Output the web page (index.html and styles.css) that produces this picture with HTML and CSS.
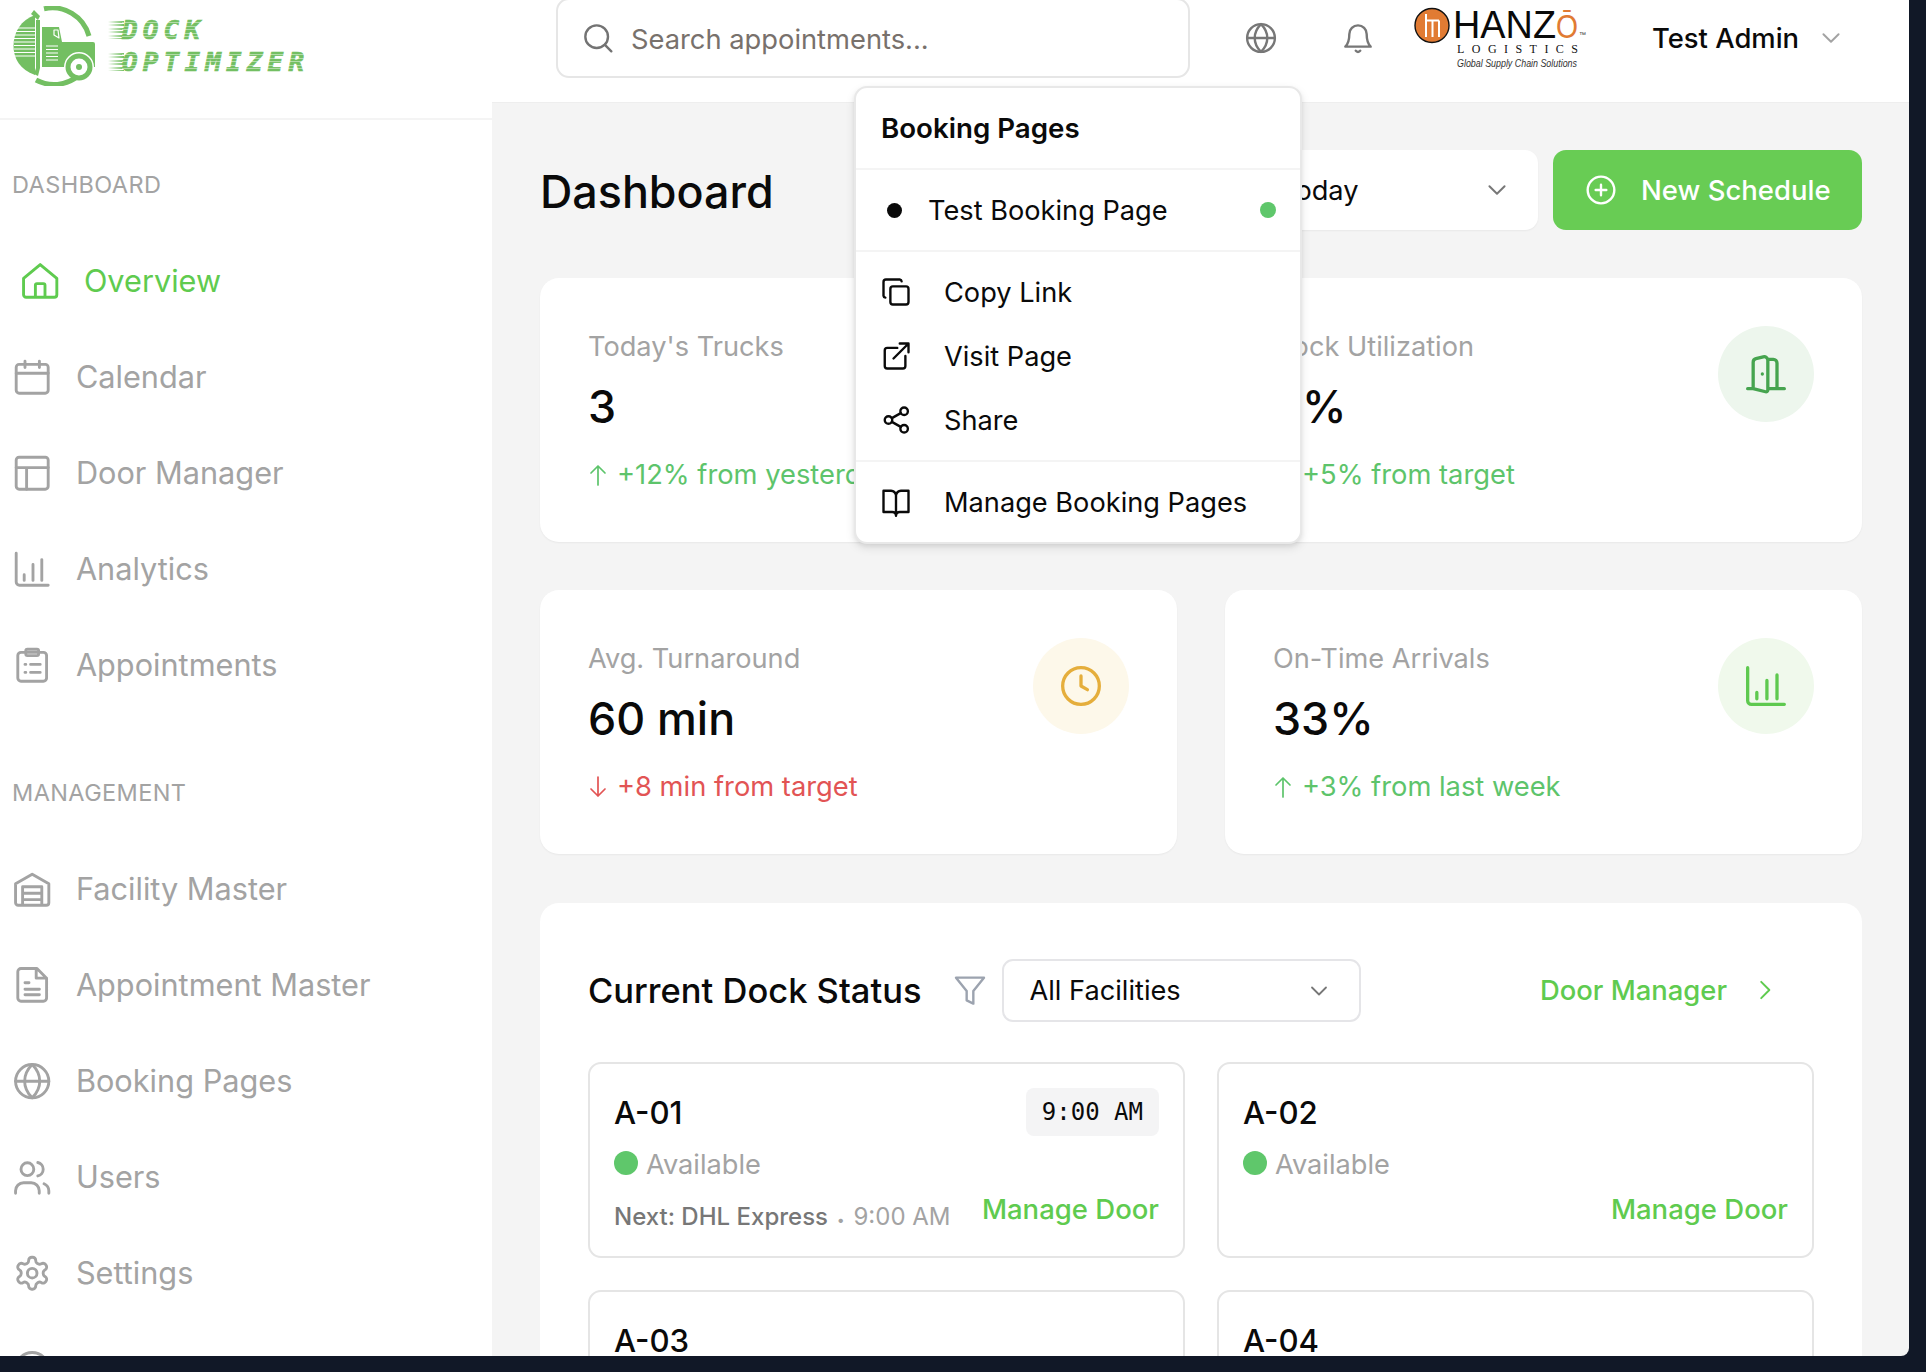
FILE: index.html
```html
<!DOCTYPE html>
<html lang="en">
<head>
<meta charset="utf-8">
<title>Dock Optimizer</title>
<link rel="stylesheet" href="styles.css">
</head>
<body>
<svg class="sprite" aria-hidden="true">
  <symbol id="i-home" viewBox="0 0 24 24"><path d="M1.6 10.2 12 1.6l10.4 8.6v10.2a1.6 1.6 0 0 1-1.6 1.6H3.2a1.6 1.6 0 0 1-1.6-1.6zM9 22v-7.5a1 1 0 0 1 1-1h4a1 1 0 0 1 1 1V22"/></symbol>
  <symbol id="i-cal" viewBox="0 0 24 24"><rect x="2" y="4" width="20" height="18" rx="1.8"/><path d="M2 9.5h20M7.5 2v4M16.5 2v4"/></symbol>
  <symbol id="i-layout" viewBox="0 0 24 24"><rect x="2" y="2" width="20" height="20" rx="1.8"/><path d="M2 8.5h20M8.5 8.5V22"/></symbol>
  <symbol id="i-bars" viewBox="0 0 24 24"><path d="M2 2v18a2 2 0 0 0 2 2h18M7 15.5V19M12.5 9v10M18 6v13"/></symbol>
  <symbol id="i-clip" viewBox="0 0 24 24"><rect x="3" y="4" width="18" height="18" rx="2"/><rect x="8" y="2" width="8" height="4" rx="1"/><path d="M7.5 11.5h.5M11 11.5h6M7.5 16.5h.5M11 16.5h6"/></symbol>
  <symbol id="i-ware" viewBox="0 0 24 24"><path d="M1.6 8.6 12 2.6l10.4 6v11.8a1.6 1.6 0 0 1-1.6 1.6H3.2a1.6 1.6 0 0 1-1.6-1.6zM6 22V10.5h12V22M6 14.5h12M6 18.500h12"/></symbol>
  <symbol id="i-doc" viewBox="0 0 24 24"><path d="M5 1.600h10L21 7.600V20a2 2 0 0 1-2 2H5a2 2 0 0 1-2-2V3.600a2 2 0 0 1 2-2zM14.500 1.600v6H21M7.500 10.500h2.500M7.500 14.500h9M7.500 18h9"/></symbol>
  <symbol id="i-globe" viewBox="0 0 24 24"><circle cx="12" cy="12" r="10.400"/><path d="M1.600 12h20.800M12 1.600c-6.300 6.300-6.300 14.500 0 20.800c6.300-6.300 6.300-14.500 0-20.800z"/></symbol>
  <symbol id="i-users" viewBox="0 0 24 24"><circle cx="9" cy="7" r="4"/><path d="M1.600 22v-1.500a5 5 0 0 1 5-5h4.800a5 5 0 0 1 5 5V22M15.500 2.800a4.300 4.300 0 0 1 0 8.400M22.400 22v-1.500a5 5 0 0 0-3-4.400"/></symbol>
  <symbol id="i-gear" viewBox="0 0 24 24"><path d="M12.220 2h-.44a2 2 0 0 0-2 2v.18a2 2 0 0 1-1 1.730l-.43.25a2 2 0 0 1-2 0l-.15-.08a2 2 0 0 0-2.730.73l-.22.38a2 2 0 0 0 .73 2.730l.15.1a2 2 0 0 1 1 1.720v.51a2 2 0 0 1-1 1.740l-.15.09a2 2 0 0 0-.73 2.730l.22.38a2 2 0 0 0 2.730.73l.15-.08a2 2 0 0 1 2 0l.43.25a2 2 0 0 1 1 1.730V20a2 2 0 0 0 2 2h.44a2 2 0 0 0 2-2v-.18a2 2 0 0 1 1-1.730l.43-.25a2 2 0 0 1 2 0l.15.08a2 2 0 0 0 2.730-.73l.22-.39a2 2 0 0 0-.73-2.730l-.15-.08a2 2 0 0 1-1-1.740v-.5a2 2 0 0 1 1-1.740l.15-.09a2 2 0 0 0 .73-2.730l-.22-.38a2 2 0 0 0-2.730-.73l-.15.08a2 2 0 0 1-2 0l-.43-.25a2 2 0 0 1-1-1.730V4a2 2 0 0 0-2-2z"/><circle cx="12" cy="12" r="3"/></symbol>
  <symbol id="i-help" viewBox="0 0 24 24"><circle cx="12" cy="12" r="10.400"/></symbol>
  <symbol id="i-search" viewBox="0 0 24 24"><circle cx="11" cy="11" r="8.500"/><path d="m17.200 17.200 4.800 4.800"/></symbol>
  <symbol id="i-bell" viewBox="0 0 24 24"><path d="M12 2.500a6.500 6.500 0 0 0-6.500 6.500c0 5-1 7.500-3 9.500h19c-2-2-3-4.500-3-9.500A6.500 6.500 0 0 0 12 2.500zM10.300 21.500a2 2 0 0 0 3.400 0"/></symbol>
  <symbol id="i-chev" viewBox="0 0 24 24"><path d="m5 8.500 7 7 7-7"/></symbol>
  <symbol id="i-right" viewBox="0 0 24 24"><path d="m8.500 4.500 7.500 7.500-7.500 7.500"/></symbol>
  <symbol id="i-plus" viewBox="0 0 24 24"><circle cx="12" cy="12" r="10"/><path d="M12 8v8M8 12h8"/></symbol>
  <symbol id="i-copy" viewBox="0 0 24 24"><rect x="7.500" y="7.500" width="14.500" height="14.500" rx="2"/><path d="M3.500 16.500A1.700 1.700 0 0 1 2 15V4a2 2 0 0 1 2-2h11a1.700 1.700 0 0 1 1.500 1.500"/></symbol>
  <symbol id="i-ext" viewBox="0 0 24 24"><path d="M13 5.500H5A2 2 0 0 0 3 7.500V20a2 2 0 0 0 2 2h12.500a2 2 0 0 0 2-2v-8M10 14 22 2M15 2h7v7"/></symbol>
  <symbol id="i-share" viewBox="0 0 24 24"><circle cx="18.500" cy="5" r="3"/><circle cx="6" cy="12" r="3"/><circle cx="18.500" cy="19" r="3"/><path d="m8.700 13.500 7.100 4M15.800 6.500 8.700 10.500"/></symbol>
  <symbol id="i-book" viewBox="0 0 24 24"><path d="M12 6.500A4.500 4.500 0 0 0 8 3H2v17h7a3 3 0 0 1 3 3 3 3 0 0 1 3-3h7V3h-6a4.500 4.500 0 0 0-4 3.500zM12 6.500V23"/></symbol>
  <symbol id="i-door" viewBox="0 0 24 24"><path d="M13 4h3a2 2 0 0 1 2 2v14M2 20h3M13 20h9M10 12v.01M13 4.562v16.157a1 1 0 0 1-1.242.97L5 20V5.562a2 2 0 0 1 1.515-1.940l4-1A2 2 0 0 1 13 4.561z"/></symbol>
  <symbol id="i-clock" viewBox="0 0 24 24"><circle cx="12" cy="12" r="10"/><path d="M12 6.500V12l3.500 2"/></symbol>
  <symbol id="i-filter" viewBox="0 0 24 24"><path d="M1.500 2h21L14.500 12v9.500L9.500 19v-7z"/></symbol>
  <symbol id="i-up" viewBox="0 0 20 24"><path d="M10 22V3M3 10l7-7 7 7"/></symbol>
  <symbol id="i-down" viewBox="0 0 20 24"><path d="M10 2v19M3 14l7 7 7-7"/></symbol>
</svg>

<div class="app">
  <aside class="sidebar">
    <div class="brand">
      <svg class="truck" viewBox="0 0 84 80">
        <path class="truck-ring" d="M32 2.800A38 38 0 0 1 77 30M66 70A38 38 0 0 1 24 74"/>
        <path class="truck-fill" d="M23 9C9 14 1.500 26 1.500 40c0 12 6.500 24 21.500 29z"/>
        <path class="truck-lines" d="M2 22h21M2 25.500h21M2 29h21M2 32.500h21M2 36h21M2 39.500h21M2 43h21M2 46.500h21M2 50h21"/>
        <path class="truck-fill" d="M24 14h4v48l-2 8-4-2 2-6zM19 8l3-4 6 6-2 4z"/>
        <path class="truck-fill" d="M30 21h17l3 15h31a2 2 0 0 1 2 2v23h-1a15 15 0 0 0-30 0H30z"/>
        <path class="truck-lines" d="M34 40h12M34 43.500h12M34 47h12M34 50.500h12M34 54h12M42 24l4 0 1 8-5-3z"/>
        <circle class="truck-wheel" cx="67" cy="61" r="11"/>
        <circle class="truck-hub" cx="67" cy="61" r="3"/>
      </svg>
      <div class="wordmark">
        <span class="wordline">DOCK</span>
        <span class="wordline">OPTIMIZER</span>
      </div>
    </div>
    <div class="nav-label">DASHBOARD</div>
    <nav class="nav">
      <a class="nav-item is-active"><svg class="nav-icon"><use href="#i-home"/></svg>Overview</a>
      <a class="nav-item"><svg class="nav-icon"><use href="#i-cal"/></svg>Calendar</a>
      <a class="nav-item"><svg class="nav-icon"><use href="#i-layout"/></svg>Door Manager</a>
      <a class="nav-item"><svg class="nav-icon"><use href="#i-bars"/></svg>Analytics</a>
      <a class="nav-item"><svg class="nav-icon"><use href="#i-clip"/></svg>Appointments</a>
    </nav>
    <div class="nav-label nav-label-second">MANAGEMENT</div>
    <nav class="nav">
      <a class="nav-item"><svg class="nav-icon"><use href="#i-ware"/></svg>Facility Master</a>
      <a class="nav-item"><svg class="nav-icon"><use href="#i-doc"/></svg>Appointment Master</a>
      <a class="nav-item"><svg class="nav-icon"><use href="#i-globe"/></svg>Booking Pages</a>
      <a class="nav-item"><svg class="nav-icon"><use href="#i-users"/></svg>Users</a>
      <a class="nav-item"><svg class="nav-icon"><use href="#i-gear"/></svg>Settings</a>
      <a class="nav-item"><svg class="nav-icon"><use href="#i-help"/></svg></a>
    </nav>
  </aside>

  <div class="main">
    <header class="topbar">
      <div class="search">
        <svg class="search-icon"><use href="#i-search"/></svg>
        <span class="search-text">Search appointments...</span>
      </div>
      <svg class="top-icon top-globe"><use href="#i-globe"/></svg>
      <svg class="top-icon top-bell"><use href="#i-bell"/></svg>
      <svg class="hanzo" viewBox="0 0 175 68">
        <circle class="hanzo-disc" cx="18" cy="21.500" r="17"/>
        <path class="hanzo-mark" d="M12 10v23M12 16.500h13M18.500 16.500V33M25 16.500V33"/>
        <text class="hanzo-name" x="39" y="33.500" textLength="103" lengthAdjust="spacingAndGlyphs">HANZ</text>
        <text class="hanzo-o" x="142" y="33.500" textLength="22" lengthAdjust="spacingAndGlyphs">Ō</text>
        <text class="hanzo-tm" x="165" y="33">™</text>
        <text class="hanzo-sub" x="43" y="48.500" textLength="121">LOGISTICS</text>
        <text class="hanzo-tag" x="43" y="62.500" textLength="120" lengthAdjust="spacingAndGlyphs">Global Supply Chain Solutions</text>
      </svg>
      <div class="user">
        <span class="user-name">Test Admin</span>
        <svg class="user-chev"><use href="#i-chev"/></svg>
      </div>
    </header>

    <main class="content">
      <div class="page-head">
        <h1 class="page-title">Dashboard</h1>
        <div class="page-actions">
          <div class="range">
            <span>Today</span>
            <svg class="range-chev"><use href="#i-chev"/></svg>
          </div>
          <button class="primary"><svg class="primary-icon"><use href="#i-plus"/></svg>New Schedule</button>
        </div>
      </div>

      <section class="stats">
        <article class="stat">
          <div>
            <div class="stat-label">Today's Trucks</div>
            <div class="stat-value">3</div>
            <div class="stat-delta up"><svg class="delta-icon"><use href="#i-up"/></svg>+12% from yesterday</div>
          </div>
          <div class="stat-badge badge-door"><svg class="badge-icon"><use href="#i-door"/></svg></div>
        </article>
        <article class="stat">
          <div>
            <div class="stat-label">Dock Utilization</div>
            <div class="stat-value">0%</div>
            <div class="stat-delta up"><svg class="delta-icon"><use href="#i-up"/></svg>+5% from target</div>
          </div>
          <div class="stat-badge badge-door"><svg class="badge-icon"><use href="#i-door"/></svg></div>
        </article>
        <article class="stat">
          <div>
            <div class="stat-label">Avg. Turnaround</div>
            <div class="stat-value">60 min</div>
            <div class="stat-delta down"><svg class="delta-icon"><use href="#i-down"/></svg>+8 min from target</div>
          </div>
          <div class="stat-badge badge-clock"><svg class="badge-icon"><use href="#i-clock"/></svg></div>
        </article>
        <article class="stat">
          <div>
            <div class="stat-label">On-Time Arrivals</div>
            <div class="stat-value">33%</div>
            <div class="stat-delta up"><svg class="delta-icon"><use href="#i-up"/></svg>+3% from last week</div>
          </div>
          <div class="stat-badge badge-bars"><svg class="badge-icon"><use href="#i-bars"/></svg></div>
        </article>
      </section>

      <section class="dock">
        <div class="dock-head">
          <h2 class="dock-title">Current Dock Status</h2>
          <svg class="filter-icon"><use href="#i-filter"/></svg>
          <div class="facility">
            <span>All Facilities</span>
            <svg class="facility-chev"><use href="#i-chev"/></svg>
          </div>
          <a class="door-link">Door Manager<svg class="door-link-icon"><use href="#i-right"/></svg></a>
        </div>
        <div class="doors">
          <article class="door">
            <div class="door-top"><span class="door-name">A-01</span><span class="door-time">9:00 AM</span></div>
            <div class="door-status"><span class="status-dot"></span>Available</div>
            <div class="door-foot">
              <span class="door-next">Next: DHL Express<span class="door-sep">•</span><span class="door-next-time">9:00 AM</span></span>
              <a class="door-manage">Manage Door</a>
            </div>
          </article>
          <article class="door">
            <div class="door-top"><span class="door-name">A-02</span></div>
            <div class="door-status"><span class="status-dot"></span>Available</div>
            <div class="door-foot door-foot-end">
              <a class="door-manage">Manage Door</a>
            </div>
          </article>
          <article class="door">
            <div class="door-top"><span class="door-name">A-03</span></div>
          </article>
          <article class="door">
            <div class="door-top"><span class="door-name">A-04</span></div>
          </article>
        </div>
      </section>
    </main>
  </div>

  <div class="popover">
    <div class="pop-head">Booking Pages</div>
    <div class="pop-page">
      <span class="pop-bullet"></span>
      <span class="pop-page-name">Test Booking Page</span>
      <span class="pop-live"></span>
    </div>
    <div class="pop-actions">
      <a class="pop-item"><svg class="pop-icon"><use href="#i-copy"/></svg>Copy Link</a>
      <a class="pop-item"><svg class="pop-icon"><use href="#i-ext"/></svg>Visit Page</a>
      <a class="pop-item"><svg class="pop-icon"><use href="#i-share"/></svg>Share</a>
    </div>
    <div class="pop-foot">
      <a class="pop-item"><svg class="pop-icon"><use href="#i-book"/></svg>Manage Booking Pages</a>
    </div>
  </div>
</div>
</body>
</html>
```

FILE: styles.css
```css
* { box-sizing: border-box; }
html, body { margin: 0; height: 100%; }
body {
  width: 1926px;
  height: 1372px;
  overflow: hidden;
  background: #111827;
  font-family: Inter, "Liberation Sans", sans-serif;
  color: #0a0a0a;
}
svg { fill: none; stroke: currentColor; stroke-width: 1.8; stroke-linecap: round; stroke-linejoin: round; flex: none; }
.sprite { display: none; }
a { color: inherit; text-decoration: none; }
h1, h2 { margin: 0; font-weight: 500; }

.app {
  position: relative;
  display: flex;
  width: 1909px;
  height: 1356px;
  overflow: hidden;
  border-bottom-right-radius: 8px;
  background: #f4f4f4;
}

/* Sidebar */
.sidebar { width: 492px; flex: none; background: #fff; }
.brand {
  display: flex;
  align-items: flex-start;
  gap: 14px;
  height: 120px;
  padding: 6px 0 0 12px;
  border-bottom: 2px solid #f4f4f4;
}
.truck { width: 84px; height: 80px; stroke: none; }
.truck-ring { stroke: #73bf62; stroke-width: 5; fill: none; stroke-linecap: butt; }
.truck-fill { fill: #73bf62; stroke: none; }
.truck-lines { stroke: #fff; stroke-width: 1.2; stroke-linecap: butt; }
.truck-wheel { fill: #fff; stroke: #73bf62; stroke-width: 5; }
.truck-hub { fill: #73bf62; stroke: none; }
.wordmark { display: flex; flex-direction: column; gap: 12px; padding-top: 14px; padding-left: 12px; }
.wordline {
  position: relative;
  display: block;
  font-family: "DejaVu Sans Mono", monospace;
  font-size: 26px;
  line-height: 20px;
  font-weight: 700;
  font-style: italic;
  letter-spacing: 5.150px;
  color: #73bf62;
  -webkit-text-stroke: .7px #73bf62;
}
.wordline::before {
  content: "";
  position: absolute;
  left: -14px;
  top: 1px;
  bottom: 1px;
  width: 16px;
  background: repeating-linear-gradient(#73bf62 0 2px, transparent 2px 3.5px);
  -webkit-mask-image: linear-gradient(90deg, transparent, #000);
  mask-image: linear-gradient(90deg, transparent, #000);
}
.wordline::after {
  content: "";
  position: absolute;
  inset: 0;
  background: repeating-linear-gradient(transparent 0 2.500px, rgba(255,255,255,.45) 2.500px 3.500px);
}
.nav-label {
  height: 30px;
  margin: 50px 0 33px 12px;
  font-size: 23.500px;
  line-height: 30px;
  color: #a3a3a3;
  letter-spacing: .4px;
}
.nav-label-second { margin-top: 65px; margin-bottom: 33px; }
.nav-item {
  display: flex;
  align-items: center;
  gap: 24.500px;
  height: 96px;
  padding-left: 13px;
  font-size: 30.700px;
  line-height: 36px;
  color: #a3a3a3;
}
.nav-item.is-active { padding-left: 21px; color: #5fcb4f; }
.nav-icon { width: 38.4px; height: 38.4px; }

/* Top bar */
.main { flex: 1; min-width: 0; display: flex; flex-direction: column; }
.topbar {
  position: relative;
  display: flex;
  align-items: center;
  height: 103px;
  flex: none;
  padding: 0 0 27px 64px;
  background: #fff;
  border-bottom: 1px solid #eee;
}
.search {
  display: flex;
  align-items: center;
  gap: 20px;
  width: 634px;
  height: 80px;
  padding-left: 24px;
  border: 2px solid #e6e6e6;
  border-radius: 13px;
  background: #fff;
}
.search-icon { width: 32px; height: 32px; color: #737373; }
.search-text { margin-left: -3px; padding-top: 3px; font-size: 27.300px; color: #78716c; }
.top-icon { width: 32px; height: 32px; color: #777; }
.top-globe { margin-left: 55px; }
.top-bell { margin-left: 65px; }
.hanzo { width: 175px; height: 68px; margin-left: 40px; stroke: none; }
.hanzo-disc { fill: #e17b33; stroke: #111; stroke-width: 1.4; }
.hanzo-mark { stroke: #fff; stroke-width: 2; stroke-linecap: butt; fill: none; }
.hanzo-name, .hanzo-o { font-family: "Liberation Sans", sans-serif; font-size: 39px; stroke: none; fill: #0a0a0a; }
.hanzo-o { font-size: 34px; fill: #e17b33; }
.hanzo-tm { font-family: "Liberation Sans", sans-serif; font-size: 7px; stroke: none; fill: #333; }
.hanzo-sub { font-family: "Liberation Serif", serif; font-size: 12px; stroke: none; fill: #111; }
.hanzo-tag { font-family: "Liberation Sans", sans-serif; font-style: italic; font-size: 10px; stroke: none; fill: #333; }
.user { display: flex; align-items: center; gap: 19px; margin-left: 63px; }
.user-name { font-size: 27.400px; font-weight: 500; }
.user-chev { width: 26px; height: 26px; color: #a3a3a3; }

/* Content */
.content { flex: 1; min-height: 0; overflow: hidden; padding: 47px 47px 0 48px; }
.page-head { display: flex; align-items: center; justify-content: space-between; height: 80px; }
.page-title { padding-top: 3px; font-size: 44.8px; line-height: 80px; }
.page-actions { display: flex; gap: 15px; height: 80px; }
.range {
  display: flex;
  align-items: center;
  justify-content: space-between;
  width: 288px;
  padding: 0 28px 0 30px;
  font-size: 27.200px;
  background: #fff;
  border-radius: 13px;
  box-shadow: 0 1px 2px rgba(0,0,0,.05);
}
.range-chev { width: 26px; height: 26px; color: #777; }
.primary {
  display: flex;
  align-items: center;
  gap: 24px;
  width: 309px;
  padding: 0 0 0 32px;
  border: 0;
  border-radius: 13px;
  background: #68cc54;
  color: #fff;
  font: 500 27.500px Inter, "Liberation Sans", sans-serif;
}
.primary-icon { width: 32px; height: 32px; }

.stats { display: grid; grid-template-columns: 1fr 1fr; gap: 48px; margin-top: 48px; }
.stat {
  display: flex;
  justify-content: space-between;
  align-items: flex-start;
  height: 264px;
  padding: 48px;
  background: #fff;
  border-radius: 19px;
  box-shadow: 0 1px 2px rgba(0,0,0,.05);
}
.stat-label { margin-top: 1px; font-size: 27.200px; line-height: 40px; color: #a3a3a3; }
.stat-value { margin-top: 12px; font-size: 44.8px; line-height: 56px; font-weight: 500; }
.stat-delta { display: flex; align-items: center; gap: 9px; margin-top: 22px; font-size: 27.300px; line-height: 36px; }
.stat-delta.up { color: #5dc46b; }
.stat-delta.down { color: #e25454; }
.delta-icon { width: 20px; height: 24px; stroke-width: 1.7; }
.stat-badge { display: flex; align-items: center; justify-content: center; width: 96px; height: 96px; border-radius: 50%; }
.badge-icon { width: 44px; height: 44px; }
.badge-door { background: #edf6ed; color: #46a44f; }
.badge-clock { background: #fdf8ea; color: #e5ae3c; }
.badge-bars { background: #f0f9ec; color: #5ec94f; }

.dock {
  margin-top: 49px;
  padding: 48px 48px 0;
  background: #fff;
  border-radius: 19px 19px 0 0;
}
.dock-head { display: flex; align-items: center; height: 79px; }
.dock-title { font-size: 34.500px; }
.filter-icon { width: 32px; height: 32px; margin-left: 33px; color: #9ca3af; }
.facility {
  display: flex;
  align-items: center;
  justify-content: space-between;
  width: 359px;
  height: 63px;
  margin-left: 16px;
  padding: 0 28px 0 25px;
  border: 2px solid #e5e5e8;
  border-radius: 11px;
  font-size: 27.200px;
}
.facility-chev { width: 24px; height: 24px; color: #777; }
.door-link { display: flex; align-items: center; gap: 25px; margin: -2px 36px 0 auto; font-size: 27.400px; font-weight: 500; color: #5fcb4f; }
.door-link-icon { width: 26px; height: 26px; }
.doors { display: grid; grid-template-columns: 1fr 1fr; gap: 32px; margin-top: 32px; }
.door {
  display: flex;
  flex-direction: column;
  height: 196px;
  padding: 24px;
  border: 2px solid #e5e5e5;
  border-radius: 13px;
}
.door-top { display: flex; justify-content: space-between; align-items: center; height: 48px; }
.door-name { margin-top: 2px; font-size: 31.200px; font-weight: 500; }
.door-time {
  padding: 0 16px;
  font-family: "DejaVu Sans Mono", monospace;
  font-size: 24px;
  line-height: 48px;
  background: #f4f4f5;
  border-radius: 8px;
}
.door-status { display: flex; align-items: center; gap: 8px; margin-top: 12px; font-size: 27.200px; color: #a3a3a3; }
.status-dot { width: 24px; height: 24px; margin-top: -3px; border-radius: 50%; background: #5fc76b; }
.door-foot { display: flex; justify-content: space-between; align-items: flex-start; margin-top: 11px; }
.door-foot-end { justify-content: flex-end; }
.door-next { margin-top: 10px; font-size: 24px; font-weight: 500; color: #777; }
.door-sep { margin: 0 9px; font-size: 14px; color: #a3a3a3; }
.door-next-time { font-weight: 400; color: #a3a3a3; }
.door-manage { font-size: 27.500px; font-weight: 500; color: #5fcb4f; }

/* Booking popover */
.popover {
  position: absolute;
  left: 854px;
  top: 86px;
  width: 448px;
  height: 458px;
  background: #fff;
  border: 2px solid #e8e8e8;
  border-radius: 13px;
  box-shadow: 0 4px 10px rgba(0,0,0,.1), 0 2px 4px rgba(0,0,0,.06);
  font-size: 27.200px;
}
.pop-head { display: flex; align-items: center; height: 82px; padding-left: 25px; font-size: 27.700px; font-weight: 600; border-bottom: 2px solid #f4f4f4; }
.pop-page { display: flex; align-items: center; height: 82px; padding: 0 24px 0 31px; border-bottom: 2px solid #f4f4f4; }
.pop-bullet { width: 15px; height: 15px; border-radius: 50%; background: #0a0a0a; }
.pop-page-name { margin-left: 26px; flex: 1; }
.pop-live { width: 16px; height: 16px; border-radius: 50%; background: #5fc76b; }
.pop-actions { padding: 8px 0 8px; border-bottom: 2px solid #f4f4f4; }
.pop-foot { padding-top: 8px; }
.pop-item { display: flex; align-items: center; gap: 33px; height: 64px; padding-left: 25px; }
.pop-icon { width: 30px; height: 30px; stroke-width: 1.9; }
```
